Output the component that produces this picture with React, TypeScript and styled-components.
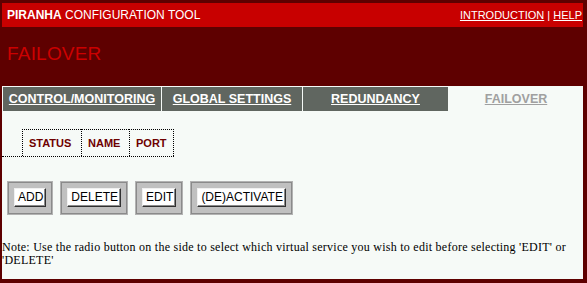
import React from 'react';
import styled, { createGlobalStyle } from 'styled-components';

const GlobalStyle = createGlobalStyle`
  html, body {
    margin: 0;
    padding: 0;
    background: #5e0000;
  }
`;

const sans = `"Liberation Sans", Arial, sans-serif`;

const Page = styled.div`
  width: 587px;
  height: 283px;
  box-sizing: border-box;
  padding: 3px 4px 4px 2px;
  display: flex;
  flex-direction: column;
  font-family: ${sans};
`;

const TopBar = styled.div`
  height: 24px;
  background: #c80000;
  display: flex;
  align-items: center;
  justify-content: space-between;
  padding: 0 1px 0 5px;
  color: #fff;
  font-size: 12px;
`;

const Brand = styled.div`
  white-space: nowrap;
  b {
    font-weight: bold;
  }
`;

const TopLinks = styled.div`
  font-size: 11px;
  white-space: nowrap;
  a {
    color: #fff;
    text-decoration: underline;
  }
`;

const PageTitle = styled.div`
  height: 59px;
  box-sizing: border-box;
  padding: 16px 0 0 5px;
  color: #cc0000;
  font-size: 19px;
  letter-spacing: 0.2px;
`;

const Panel = styled.div`
  flex: 1;
  background: #f6faf7;
  display: flex;
  flex-direction: column;
`;

const Tabs = styled.div`
  display: grid;
  grid-template-columns: 158px 140px 145px 1fr;
  gap: 1px;
  padding: 1px 0 0 1px;
  height: 25px;
  box-sizing: border-box;
`;

const Tab = styled.div<{ $active?: boolean }>`
  background: ${({ $active }) => ($active ? 'transparent' : '#606660')};
  display: flex;
  align-items: center;
  justify-content: center;
  font-size: 12.5px;
  font-weight: bold;
  color: ${({ $active }) => ($active ? '#a0a0a0' : '#fff')};
  text-decoration: underline;
  white-space: nowrap;
`;

const ServiceTable = styled.div`
  margin-top: 18px;
  width: 172px;
  display: flex;
  border-bottom: 1px dotted #000;
`;

const Spacer = styled.div`
  width: 20px;
`;

const HeadCell = styled.div<{ $w: number }>`
  width: ${({ $w }) => $w}px;
  height: 27px;
  box-sizing: border-box;
  border: 1px dotted #000;
  border-bottom: none;
  border-right: none;
  display: flex;
  align-items: center;
  padding-left: 6px;
  color: #6e0000;
  font-size: 11px;
  font-weight: bold;
  &:last-child {
    border-right: 1px dotted #000;
  }
`;

const Actions = styled.div`
  display: flex;
  gap: 7px;
  margin: 24px 0 0 5px;
`;

const ButtonFrame = styled.div`
  background: #c0c0c0;
  border: 1px solid #b2b2b2;
  box-shadow: inset 0 0 0 1px #8a8a8a;
  padding: 6px 6px 7px 6px;
`;

const ActionButton = styled.button`
  font-family: ${sans};
  font-size: 12px;
  line-height: 15px;
  color: #000;
  background: #fff;
  margin: 0;
  padding: 1px 2px 1px 3px;
  border: 1px solid;
  border-color: #f0f0f0 #303030 #303030 #f0f0f0;
  box-shadow: inset -1px -1px 0 #8c8c8c;
  border-radius: 0;
  display: block;
  cursor: pointer;
`;

const Note = styled.p`
  margin: 26px 0 0 0;
  font-family: "Liberation Serif", "Times New Roman", serif;
  font-size: 12px;
  line-height: 13px;
  color: #000;
  letter-spacing: 0.25px;
`;

const tabs = [
  { label: 'CONTROL/MONITORING' },
  { label: 'GLOBAL SETTINGS' },
  { label: 'REDUNDANCY' },
  { label: 'FAILOVER', active: true },
];

const buttons = ['ADD', 'DELETE', 'EDIT', '(DE)ACTIVATE'];

export default function App() {
  return (
    <>
      <GlobalStyle />
      <Page>
        <TopBar>
          <Brand>
            <b>PIRANHA</b> CONFIGURATION TOOL
          </Brand>
          <TopLinks>
            <a href="#">INTRODUCTION</a> | <a href="#">HELP</a>
          </TopLinks>
        </TopBar>
        <PageTitle>FAILOVER</PageTitle>
        <Panel>
          <Tabs>
            {tabs.map(t => (
              <Tab key={t.label} $active={t.active}>{t.label}</Tab>
            ))}
          </Tabs>
          <ServiceTable>
            <Spacer />
            <HeadCell $w={59}>STATUS</HeadCell>
            <HeadCell $w={48}>NAME</HeadCell>
            <HeadCell $w={45}>PORT</HeadCell>
          </ServiceTable>
          <Actions>
            {buttons.map(b => (
              <ButtonFrame key={b}>
                <ActionButton type="button">{b}</ActionButton>
              </ButtonFrame>
            ))}
          </Actions>
          <Note>
            Note: Use the radio button on the side to select which virtual service you wish to edit before selecting 'EDIT' or 'DELETE'
          </Note>
        </Panel>
      </Page>
    </>
  );
}
